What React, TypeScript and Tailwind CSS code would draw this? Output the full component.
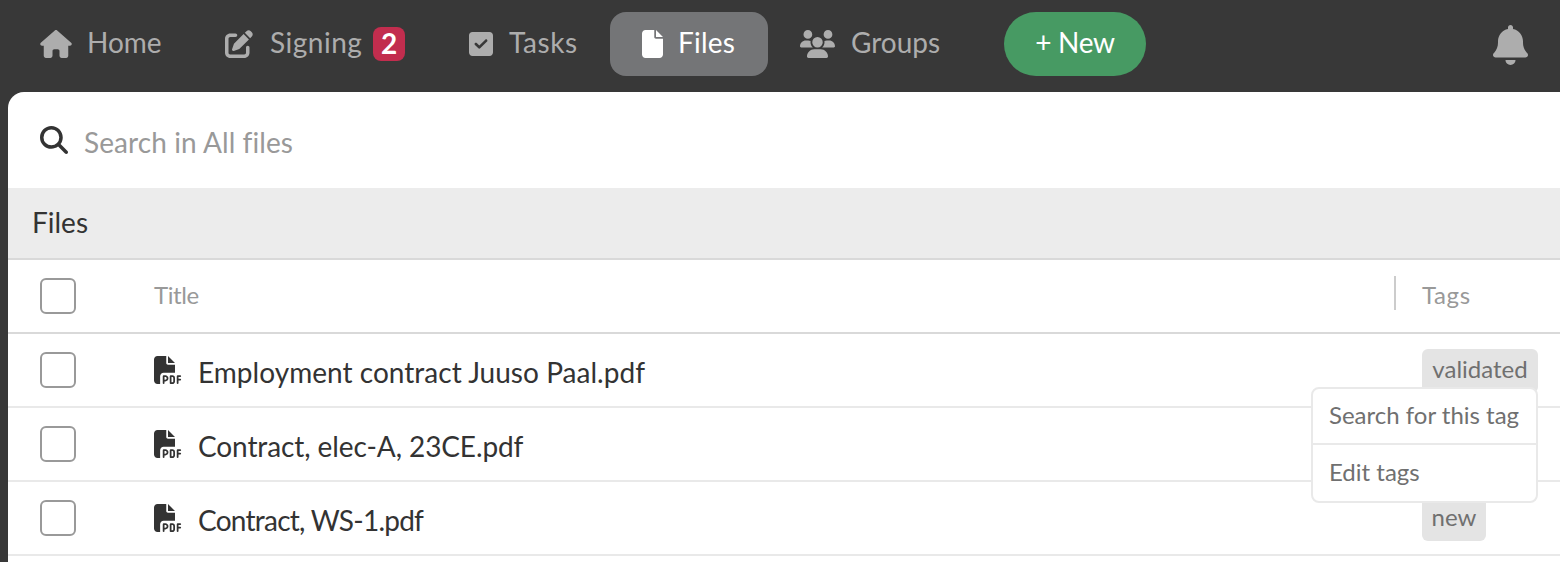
import type { ReactNode } from 'react';
import {
    FaBell,
    FaFile,
    FaFilePdf,
    FaHouse,
    FaMagnifyingGlass,
    FaPenToSquare,
    FaSquareCheck,
    FaUsers,
} from 'react-icons/fa6';

const files = [
    { name: 'Employment contract Juuso Paal.pdf', tag: 'validated', className: 'tracking-[0.03px]', tagClass: 'w-[116px]' },
    { name: 'Contract, elec-A, 23CE.pdf', tag: '', className: 'tracking-[-0.1px]', tagClass: '' },
    { name: 'Contract, WS-1.pdf', tag: 'new', className: 'tracking-[-0.75px]', tagClass: 'w-16' },
];

function NavItem({ className, active, children }: { className: string; active?: boolean; children: ReactNode }) {
    return (
        <a
            href="#"
            className={`flex h-16 shrink-0 items-center rounded-2xl pl-8 ${active ? 'bg-[#747577] text-white' : 'text-[#adadad]'} ${className}`}
        >
            {children}
        </a>
    );
}

function Checkbox() {
    return <span className="block size-9 shrink-0 rounded-md border-2 border-[#999] bg-white" />;
}

export default function App() {
    return (
        <div className="h-[562px] w-[1560px] overflow-hidden bg-[#383838] pl-2 font-['Lato','Liberation_Sans',sans-serif] text-[28px] leading-8 whitespace-nowrap text-[#333] [font-variant-ligatures:none]">
            <header className="flex h-[92px] items-start pt-3">
                <nav className="flex">
                    <NavItem className="w-[185px]">
                        <FaHouse className="h-7 w-8" />
                        <span className="ml-[15px] pb-1">Home</span>
                    </NavItem>
                    <NavItem className="w-[244px]">
                        <FaPenToSquare className="size-7" />
                        <span className="ml-[17px] w-[91px] pb-1 tracking-[0.5px]">Signing</span>
                        <span className="ml-3 flex h-[34px] w-8 items-center justify-center rounded-lg bg-[#c22d4e] pb-0.5 font-bold text-white">2</span>
                    </NavItem>
                    <NavItem className="w-[173px]">
                        <FaSquareCheck className="h-7 w-6" />
                        <span className="ml-4 pb-1 tracking-[0.6px]">Tasks</span>
                    </NavItem>
                    <NavItem className="w-[158px]" active>
                        <FaFile className="h-7 w-[21px]" />
                        <span className="ml-[15px] pb-1 tracking-[0.2px]">Files</span>
                    </NavItem>
                    <NavItem className="w-[204px]">
                        <FaUsers className="h-7 w-[35px]" />
                        <span className="ml-4 pb-1">Groups</span>
                    </NavItem>
                </nav>
                <button className="ml-8 flex h-16 w-[142px] items-center justify-center rounded-full bg-[#479a63] pb-1 tracking-[-0.3px] text-white">
                    + New
                </button>
                <FaBell className="mt-[13px] mr-8 ml-auto h-10 w-[35px] text-[#adadad]" />
            </header>

            <main className="h-[470px] rounded-tl-2xl bg-white">
                <div className="flex h-24 items-center pl-8">
                    <FaMagnifyingGlass className="size-7" />
                    <span className="ml-4 pt-1 tracking-[0.08px] text-[#999]">Search in All files</span>
                </div>
                <h1 className="flex h-[72px] items-center border-b-2 border-[#d9d9d9] bg-[#ececec] pb-0.5 pl-6">Files</h1>

                <div className="flex h-[74px] items-center border-b-2 border-[#d9d9d9] pl-8 text-2xl text-[#999]">
                    <Checkbox />
                    <span className="ml-[78px] w-[1240px] pb-0.5 tracking-[-0.4px]">Title</span>
                    <span className="mb-1.5 h-[34px] w-0.5 bg-[#ccc]" />
                    <span className="ml-[26px] pb-0.5 tracking-[0.6px]">Tags</span>
                </div>

                {files.map((file) => (
                    <div key={file.name} className="flex h-[74px] items-center border-b-2 border-[#e9e9e9] pl-8">
                        <Checkbox />
                        <FaFilePdf className="ml-[78px] size-7" />
                        <div className="ml-4 w-[1224px] pt-1">
                            <span className={file.className}>{file.name}</span>
                        </div>
                        {file.tag && (
                            <div className="relative mt-0.5">
                                <span className={`flex h-11 items-center justify-center rounded-md bg-[#e4e4e4] pb-1 text-2xl text-[#707070] ${file.tagClass}`}>
                                    {file.tag}
                                </span>
                                {file.tag === 'validated' && (
                                    <div className="absolute top-[38px] right-0 z-10 w-[227px] rounded-lg border-2 border-[#e9e9e9] bg-white text-2xl text-[#707070]">
                                        <div className="flex h-14 items-center border-b-2 border-[#e9e9e9] pb-[3px] pl-4">Search for this tag</div>
                                        <div className="flex h-14 items-center pb-0.5 pl-4">Edit tags</div>
                                    </div>
                                )}
                            </div>
                        )}
                    </div>
                ))}
            </main>
        </div>
    );
}
